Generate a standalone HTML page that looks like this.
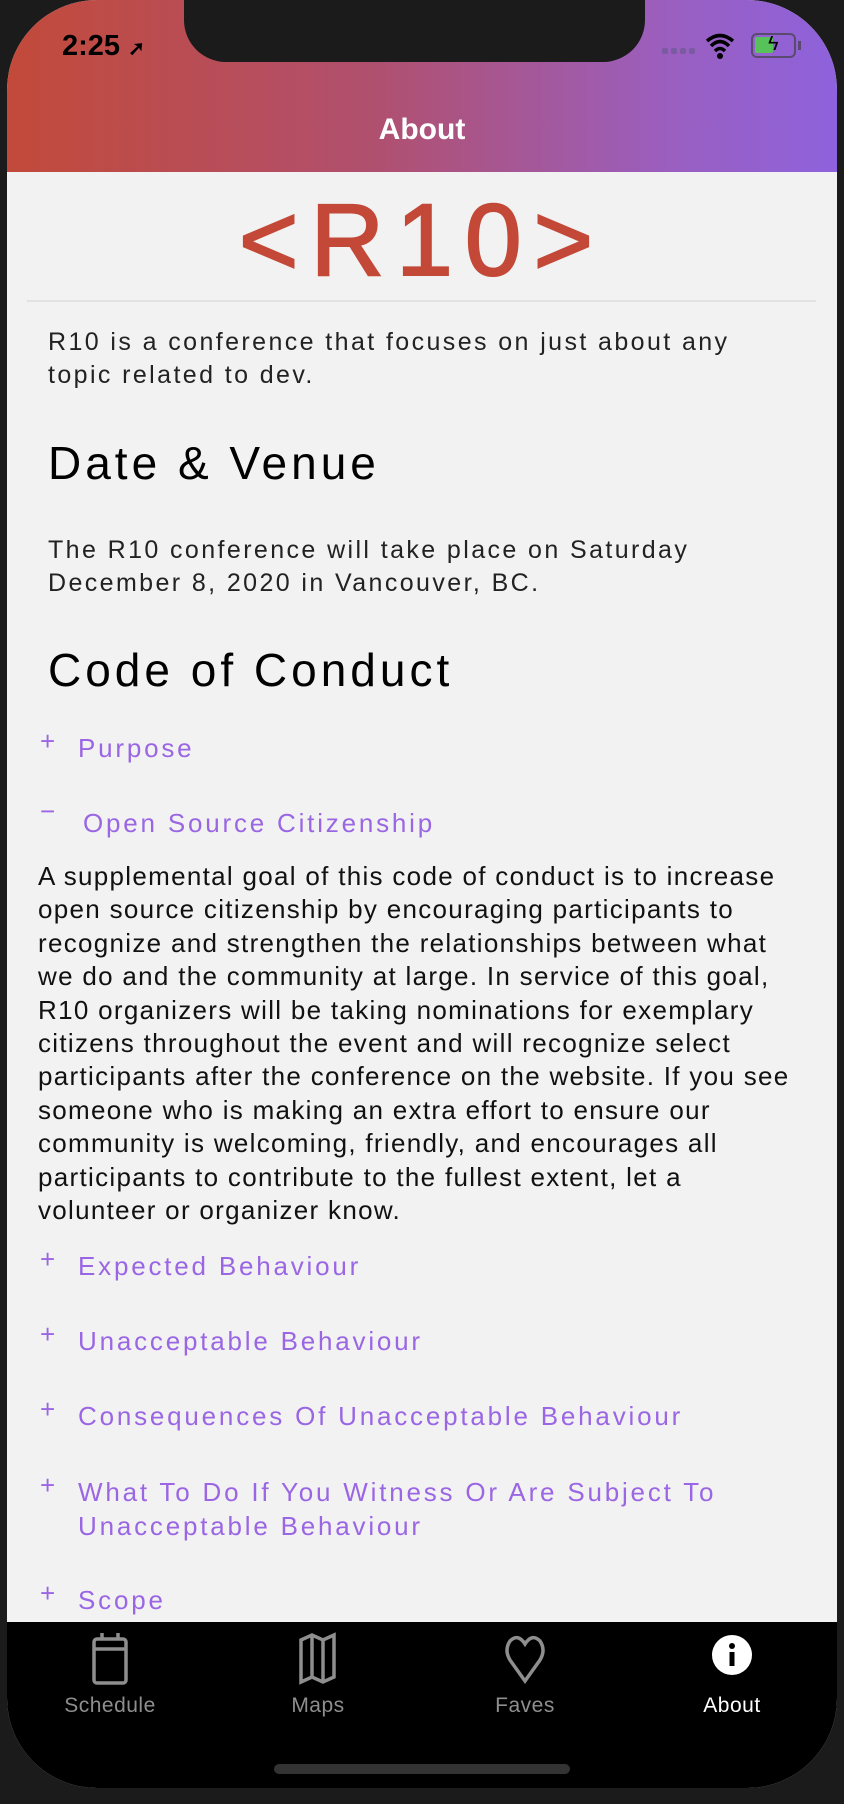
<!DOCTYPE html>
<html><head><meta charset="utf-8"><style>
*{margin:0;padding:0;box-sizing:border-box}
html,body{width:844px;height:1804px;background:#1b1b1b;overflow:hidden;font-family:"Liberation Sans",sans-serif}
#phone{position:absolute;left:7px;top:0;width:830px;height:1788px;background:#f2f2f2;border-radius:90px;overflow:hidden}
#hdr{position:absolute;left:0;top:0;width:830px;height:172px;background:linear-gradient(90deg,#c24a3a 0%,#b05070 45%,#9a5fc0 80%,#8e62dc 100%)}
#notch{position:absolute;left:184px;top:-10px;width:461px;height:72px;background:#1b1b1b;border-radius:0 0 42px 42px}
.abs{position:absolute;white-space:nowrap}
.p{font-size:25px;color:#222;letter-spacing:2.4px}
.h{font-size:46px;color:#000;letter-spacing:4px}
.lnk{font-size:26px;color:#9a66e4;letter-spacing:2.8px}
.pl{font-size:26px;color:#9a66e4}
#body{position:absolute;left:31px;top:860px;font-size:26px;letter-spacing:1.3px;line-height:33.4px;color:#111;white-space:nowrap}
#tab{position:absolute;left:0;top:1622px;width:830px;height:170px;background:#000}
.tl{position:absolute;top:1694px;font-size:21px;color:#8e8e8e;width:160px;text-align:center;letter-spacing:0.5px}
</style></head><body>
<div id="phone">
<div id="hdr"></div>
<div class="abs" style="left:0;top:113px;width:830px;text-align:center;color:#fff;font-size:30px;font-weight:bold">About</div>
<div class="abs" style="left:0;top:175px;width:830px;text-align:center;color:#c34837;font-size:102px;-webkit-text-stroke:2px #c34837;letter-spacing:12px;line-height:130px">&lt;R10&gt;</div>
<div class="abs" style="left:20px;top:300px;width:789px;height:2px;background:#e2e2e2"></div>
<div class="abs p" style="left:41px;top:328px">R10 is a conference that focuses on just about any</div>
<div class="abs p" style="left:41px;top:361px">topic related to dev.</div>
<div class="abs h" style="left:41px;top:436px">Date &amp; Venue</div>
<div class="abs p" style="left:41px;top:536px">The R10 conference will take place on Saturday</div>
<div class="abs p" style="left:41px;top:569px">December 8, 2020 in Vancouver, BC.</div>
<div class="abs h" style="left:41px;top:643px">Code of Conduct</div>
<div class="abs pl" style="left:33px;top:726px">+</div><div class="abs lnk" style="left:71px;top:733px">Purpose</div>
<div class="abs pl" style="left:33px;top:796px">−</div><div class="abs lnk" style="left:76px;top:808px">Open Source Citizenship</div>
<div id="body">A supplemental goal of this code of conduct is to increase<br>open source citizenship by encouraging participants to<br>recognize and strengthen the relationships between what<br>we do and the community at large. In service of this goal,<br>R10 organizers will be taking nominations for exemplary<br>citizens throughout the event and will recognize select<br>participants after the conference on the website. If you see<br>someone who is making an extra effort to ensure our<br>community is welcoming, friendly, and encourages all<br>participants to contribute to the fullest extent, let a<br>volunteer or organizer know.</div>
<div class="abs pl" style="left:33px;top:1244px">+</div><div class="abs lnk" style="left:71px;top:1251px">Expected Behaviour</div>
<div class="abs pl" style="left:33px;top:1319px">+</div><div class="abs lnk" style="left:71px;top:1326px">Unacceptable Behaviour</div>
<div class="abs pl" style="left:33px;top:1394px">+</div><div class="abs lnk" style="left:71px;top:1401px">Consequences Of Unacceptable Behaviour</div>
<div class="abs pl" style="left:33px;top:1470px">+</div><div class="abs lnk" style="left:71px;top:1477px">What To Do If You Witness Or Are Subject To</div>
<div class="abs lnk" style="left:71px;top:1511px">Unacceptable Behaviour</div>
<div class="abs pl" style="left:33px;top:1578px">+</div><div class="abs lnk" style="left:71px;top:1585px">Scope</div>
<div id="tab"></div>
<svg class="abs" style="left:0;top:1622px" width="830" height="80" viewBox="0 0 830 80">
<g fill="none" stroke="#8e8e8e" stroke-width="3.5">
<rect x="87" y="17" width="32" height="44" rx="3"/><line x1="87" y1="27" x2="119" y2="27"/><line x1="95" y1="11" x2="95" y2="18"/><line x1="111" y1="11" x2="111" y2="18"/>
<path d="M294 18 L305 13 L316 18 L327 13 L327 55 L316 60 L305 55 L294 60 Z M305 13 L305 55 M316 18 L316 60"/>
<path d="M518 59 L503 38 Q497 28 503 19 Q511 11 518 22 Q525 11 533 19 Q539 28 533 38 Z"/>
</g>
<circle cx="725" cy="33" r="20" fill="#fff"/><rect x="722.5" y="30" width="5" height="14" fill="#000"/><circle cx="725" cy="24" r="3" fill="#000"/>
</svg>
<div class="tl" style="left:23px">Schedule</div>
<div class="tl" style="left:231px">Maps</div>
<div class="tl" style="left:438px">Faves</div>
<div class="tl" style="left:645px;color:#fff">About</div>
<div class="abs" style="left:267px;top:1764px;width:296px;height:10px;border-radius:5px;background:#333"></div>
</div>
<div id="notch"></div>
<div class="abs" style="left:62px;top:30px;font-size:29px;font-weight:bold;color:#000">2:25 <span style="font-size:20px">➚</span></div>
<div class="abs" style="left:662px;top:48px;width:6px;height:6px;border-radius:2px;background:#7a5aa0;box-shadow:9px 0 #7a5aa0,18px 0 #7a5aa0,27px 0 #7a5aa0"></div>
<svg class="abs" style="left:705px;top:32px" width="30" height="28" viewBox="0 0 30 28"><path d="M2 9 Q15 -2 28 9 M6 14 Q15 5 24 14 M10 19 Q15 14 20 19" stroke="#000" stroke-width="3.5" fill="none"/><circle cx="15" cy="24" r="3" fill="#000"/></svg>
<div class="abs" style="left:751px;top:33px;width:45px;height:25px;border:2.5px solid #5a4a70;border-radius:6px"><div style="position:absolute;left:2px;top:2px;width:18px;height:16px;background:#58c25a;border-radius:2px"></div><div style="position:absolute;left:15px;top:-2px;font-size:20px;color:#000">ϟ</div></div>
<div class="abs" style="left:798px;top:41px;width:3px;height:9px;background:#5a4a70"></div>
</body></html>
